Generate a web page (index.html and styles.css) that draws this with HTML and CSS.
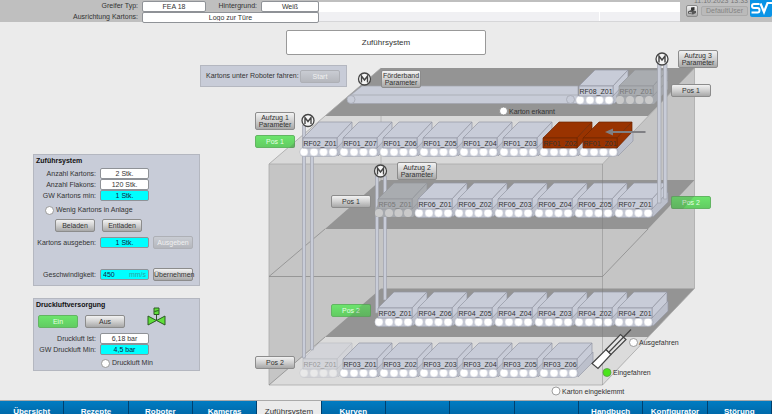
FILE: index.html
```html
<!DOCTYPE html>
<html lang="de">
<head>
<meta charset="utf-8">
<meta name="viewport" content="width=device-width, initial-scale=1">
<title>Zuführsystem</title>
<link rel="stylesheet" href="styles.css">
</head>
<body>
<header class="topbar">
  <div class="recipe">
    <label class="recipe-label" for="greifer">Greifer Typ:</label>
    <input class="value" id="greifer" value="FEA 18" readonly>
    <label class="recipe-label" for="hintergrund">Hintergrund:</label>
    <input class="value" id="hintergrund" value="Weiß" readonly>
    <label class="recipe-label" for="ausrichtung">Ausrichtung Kartons:</label>
    <input class="value wide" id="ausrichtung" value="Logo zur Türe" readonly>
  </div>
  <div class="messages">
    <div class="message"></div>
    <div class="message split"><span></span><span></span></div>
  </div>
  <div class="session">
    <time class="clock">11.10.2023 13:33</time>
    <div class="user">
      <button class="btn icon-btn" type="button" aria-label="Anmelden">
        <svg width="10" height="9" viewBox="0 0 10 9"><path d="M1 5.500 4 4l5 1v2L6 8.500 1 7.500z" fill="#555"/><path d="M4 4V1.500L7.500 1v3L5.500 5z" fill="#333"/><path d="M2 6.500 5 7" stroke="#eee" stroke-width=".8"/></svg>
      </button>
      <button class="user-name" type="button">DefaultUser</button>
    </div>
  </div>
  <svg class="logo" width="22" height="18" viewBox="0 0 22 18" aria-label="SV">
    <path d="M0 0h22v15q0 2-2 2H2q-2 0-2-2z" fill="#0a94e6"/>
    <path d="M9.500 4H4Q2 4 2 6t2 2h3.500q2 0 2 2.300t-2 2.200H1.500" fill="none" stroke="#fff" stroke-width="2"/>
    <path d="M10.500 3.500 14 12 17.500 3H22" fill="none" stroke="#fff" stroke-width="2.200"/>
  </svg>
</header>

<main class="main">
  <h1 class="title">Zuführsystem</h1>

  <aside class="sidebar">
    <section class="panel feed">
      <h2>Zuführsystem</h2>
      <div class="row"><label for="kartons">Anzahl Kartons:</label><input class="value" id="kartons" value="2 Stk." readonly></div>
      <div class="row"><label for="flakons">Anzahl Flakons:</label><input class="value" id="flakons" value="120 Stk." readonly></div>
      <div class="row"><label for="gwkartons">GW Kartons min:</label><input class="value edit" id="gwkartons" value="1 Stk."></div>
      <div class="status"><span class="lamp"></span>Wenig Kartons in Anlage</div>
      <div class="actions centred"><button class="btn" type="button">Beladen</button><button class="btn" type="button">Entladen</button></div>
      <div class="row"><label for="ausgeben">Kartons ausgeben:</label><input class="value edit" id="ausgeben" value="1 Stk."><button class="btn" type="button" disabled>Ausgeben</button></div>
      <div class="row speed"><label for="speed">Geschwindigkeit:</label><span class="value edit unit"><input id="speed" value="450"><span>mm/s</span></span><button class="btn" type="button">Übernehmen</button></div>
    </section>

    <section class="panel air">
      <h2>Druckluftversorgung</h2>
      <div class="actions">
        <button class="btn on" type="button">Ein</button><button class="btn" type="button">Aus</button>
        <svg class="valve" width="19" height="19" viewBox="0 0 19 19"><g fill="#5fe03a" stroke="#2c5a25"><path d="M1 9v9l8.500-4.500zM18 9v9l-8.500-4.500z"/><path d="M9.500 13V7.500"/><path d="M7 1h5v6.500H7z"/><path d="M7.500 4.500 11.500 3.500"/></g></svg>
      </div>
      <div class="row"><label for="ist">Druckluft Ist:</label><input class="value" id="ist" value="6,18 bar" readonly></div>
      <div class="row"><label for="gwmin">GW Druckluft Min:</label><input class="value edit" id="gwmin" value="4,5 bar"></div>
      <div class="status indent"><span class="lamp"></span>Druckluft Min</div>
    </section>
  </aside>

  <section class="plant" aria-label="Anlagenbild">
    <svg class="scene" width="572" height="378" viewBox="200 22 572 378">
      <defs>
        <g id="conveyor">
          <path d="M33 10 50-7v10L35 18z" fill="#bcc0cc" stroke="#9699a6" stroke-width=".7"/>
          <rect x="-3" y="9.500" width="38" height="9" rx="4" fill="#c3c7d3" stroke="#a5a8b4" stroke-width=".6"/>
          <g fill="#fff" stroke="#d3d5dc" stroke-width=".5"><circle cx="1" cy="14" r="4"/><circle cx="11" cy="14" r="4"/><circle cx="20.500" cy="14" r="4"/><circle cx="30" cy="14" r="4"/></g>
        </g>
        <g id="box" stroke-width=".7">
          <path d="M0 0 16-16H49L34 0z"/><path d="M34 0 49-16V-6L34 10z"/><path d="M0 0H34V10H0z"/>
        </g>
        <g id="carton"><use href="#conveyor"/><use href="#box" fill="#c8ccd8" stroke="#9497a3"/></g>
        <g id="carton-red"><use href="#conveyor"/><use href="#box" fill="#993300" stroke="#6f2500"/></g>
        <g id="carton-grey"><path d="M-3 10 16-16H49V3L35 18H-2z" fill="#a6a9ae"/><use href="#box" fill="#a9acb0" stroke="#92959b"/><g fill="#cacaca"><circle cx="1" cy="14" r="4"/><circle cx="11" cy="14" r="4"/><circle cx="20.500" cy="14" r="4"/><circle cx="30" cy="14" r="4"/></g></g>
        <g id="motor"><circle r="6" fill="#f5f5f5" stroke="#444" stroke-width="1.300"/><path d="M-3 3.500V-3L0 1 3-3V3.500" fill="none" stroke="#444" stroke-width="1.400"/></g>
      </defs>

      <path d="M269 164 381 68H694.500V288.500L602.500 385H269z" fill="#c5c5c5"/>
      <path d="M269 164 325 116H648L602.500 164z" fill="#d9d9d9"/>
      <path d="M269 385 325 337H648L602.500 385z" fill="#dbdbdb"/>
      <g fill="#949494"><path d="M325 116 381 68H694.500L648 116z"/><path d="M325 229 381 180H694.500L648 229z"/><path d="M325 337 381 288.500H694.500L648 337z"/></g>
      <g fill="none" stroke="#8c8c8c" stroke-width=".8">
        <path d="M269 164H602.500L694.500 68" stroke="#aaa"/>
        <path d="M269 385V164L381 68M269 385H602.500L694.500 288.500V68" stroke="#aaa"/>
        <path d="M269 276.500H602.500L648 229M269 276.500 325 229M269 385 325 337"/>
        <path d="M381 116V180" stroke="#b0b0b0"/>
      </g>

      <g fill="#c8ccd8" stroke="#a0a3ae" stroke-width=".7">
        <path d="M302.500 125h3V358h-3zM310.500 154h3V350h-3zM375.500 176h3V313h-3zM383.500 176h3V300h-3z"/>
        <path d="M347 98 362 86H578V103.500H351q-4-1-4-5.500z"/><path d="M352 95H578" fill="none"/>
        <circle cx="351" cy="99.500" r="4"/><circle cx="570.500" cy="99.500" r="4"/>
      </g>

      <g class="tag">
        <g transform="translate(579 86)"><use href="#carton"/><text x="17" y="8">RF08_Z01</text></g>
        <g class="dim" transform="translate(619 86)"><use href="#carton-grey"/><text x="17" y="8">RF07_Z01</text></g>

        <g transform="translate(303 138)"><use href="#carton"/><text x="17" y="8">RF02_Z01</text></g>
        <g transform="translate(343 138)"><use href="#carton"/><text x="17" y="8">RF01_Z07</text></g>
        <g transform="translate(383 138)"><use href="#carton"/><text x="17" y="8">RF01_Z06</text></g>
        <g transform="translate(423 138)"><use href="#carton"/><text x="17" y="8">RF01_Z05</text></g>
        <g transform="translate(463 138)"><use href="#carton"/><text x="17" y="8">RF01_Z04</text></g>
        <g transform="translate(503 138)"><use href="#carton"/><text x="17" y="8">RF01_Z03</text></g>
        <g transform="translate(543 138)"><use href="#carton-red"/><text x="17" y="8">RF01_Z02</text></g>
        <g transform="translate(583 138)"><use href="#carton-red"/><text x="17" y="8">RF01_Z01</text></g>

        <g class="dim" transform="translate(378 199)"><use href="#carton-grey"/><text x="17" y="8">RF05_Z01</text></g>
        <g transform="translate(418 199)"><use href="#carton"/><text x="17" y="8">RF06_Z01</text></g>
        <g transform="translate(458 199)"><use href="#carton"/><text x="17" y="8">RF06_Z02</text></g>
        <g transform="translate(498 199)"><use href="#carton"/><text x="17" y="8">RF06_Z03</text></g>
        <g transform="translate(538 199)"><use href="#carton"/><text x="17" y="8">RF06_Z04</text></g>
        <g transform="translate(578 199)"><use href="#carton"/><text x="17" y="8">RF06_Z05</text></g>
        <g transform="translate(618 199)"><use href="#carton"/><text x="17" y="8">RF07_Z01</text></g>

        <g transform="translate(378 308)"><use href="#carton"/><text x="17" y="8">RF05_Z01</text></g>
        <g transform="translate(418 308)"><use href="#carton"/><text x="17" y="8">RF04_Z06</text></g>
        <g transform="translate(458 308)"><use href="#carton"/><text x="17" y="8">RF04_Z05</text></g>
        <g transform="translate(498 308)"><use href="#carton"/><text x="17" y="8">RF04_Z04</text></g>
        <g transform="translate(538 308)"><use href="#carton"/><text x="17" y="8">RF04_Z03</text></g>
        <g transform="translate(578 308)"><use href="#carton"/><text x="17" y="8">RF04_Z02</text></g>
        <g transform="translate(618 308)"><use href="#carton"/><text x="17" y="8">RF04_Z01</text></g>

        <g class="faded" transform="translate(303 359)"><use href="#carton"/><text x="17" y="8">RF02_Z01</text></g>
        <g transform="translate(343 359)"><use href="#carton"/><text x="17" y="8">RF03_Z01</text></g>
        <g transform="translate(383 359)"><use href="#carton"/><text x="17" y="8">RF03_Z02</text></g>
        <g transform="translate(423 359)"><use href="#carton"/><text x="17" y="8">RF03_Z03</text></g>
        <g transform="translate(463 359)"><use href="#carton"/><text x="17" y="8">RF03_Z04</text></g>
        <g transform="translate(503 359)"><use href="#carton"/><text x="17" y="8">RF03_Z05</text></g>
        <g transform="translate(543 359)"><use href="#carton"/><text x="17" y="8">RF03_Z06</text></g>
      </g>

      <path d="M657.500 64h3.500V203h-3.500zM663.500 64h3.500V199h-3.500z" fill="#c8ccd8" stroke="#a0a3ae" stroke-width=".7"/>
      <path d="M602.500 164V385" stroke="#777" stroke-opacity=".5" stroke-width=".8"/>
      <path d="M645.500 132H612" stroke="#808084" stroke-width="2"/><path d="M605 132 613 128.500V135.500z" fill="#808084"/>

      <use href="#motor" x="308" y="120.500"/><use href="#motor" x="364.500" y="79"/><use href="#motor" x="380.500" y="171"/><use href="#motor" x="662" y="59"/>

      <g stroke="#444" stroke-width="1.200" fill="#fff">
        <path d="M592 363.500 606 349.500 611 354.500 598 368.500z"/><path d="M606 349.500 620.500 334.500 626 339.500 611 354.500z" fill="#e6e6e6"/><path d="M609 352 631 329.500"/>
      </g>
      <g class="lamps">
        <circle cx="503.500" cy="111" r="4"/><text x="509" y="114">Karton erkannt</text>
        <circle cx="633.500" cy="342.500" r="4"/><text x="639" y="345">Ausgefahren</text>
        <circle class="lit" cx="607" cy="372.500" r="4"/><text x="613" y="375">Eingefahren</text>
        <circle cx="556" cy="391" r="4"/><text x="562" y="394">Karton eingeklemmt</text>
      </g>
    </svg>

    <div class="panel start"><span id="start-label">Kartons unter Roboter fahren:</span><button class="btn" type="button" aria-describedby="start-label" disabled>Start</button></div>
    <button class="btn tall p-foerderband" type="button">Förderband Parameter</button>
    <button class="btn tall p-aufzug1" type="button">Aufzug 1 Parameter</button>
    <button class="btn tall p-aufzug2" type="button">Aufzug 2 Parameter</button>
    <button class="btn tall p-aufzug3" type="button">Aufzug 3 Parameter</button>
    <button class="btn on p-a1-pos1" type="button">Pos 1</button>
    <button class="btn p-a1-pos2" type="button">Pos 2</button>
    <button class="btn p-a2-pos1" type="button">Pos 1</button>
    <button class="btn on p-a2-pos2" type="button">Pos 2</button>
    <button class="btn p-a3-pos1" type="button">Pos 1</button>
    <button class="btn on p-a3-pos2" type="button">Pos 2</button>
    <svg class="shade" width="572" height="378" viewBox="200 22 572 378"><g fill="#555" fill-opacity=".2"><path d="M289 148 295 142V148z"/><path d="M349 317 363 304H371V317z"/><path d="M671 196H694.500L683 209H671z"/></g></svg>
  </section>
</main>

<nav class="tabs">
  <a href="#uebersicht">Übersicht</a>
  <a href="#rezepte">Rezepte</a>
  <a href="#roboter">Roboter</a>
  <a href="#kameras">Kameras</a>
  <a class="active" href="#zufuehrsystem" aria-current="page">Zuführsystem</a>
  <a href="#kurven">Kurven</a>
  <span></span>
  <span></span>
  <span></span>
  <a href="#handbuch">Handbuch</a>
  <a href="#konfigurator">Konfigurator</a>
  <a href="#stoerung">Störung</a>
</nav>
</body>
</html>
```
FILE: styles.css
```css
* { box-sizing: border-box; }

body {
  margin: 0;
  height: 100vh;
  overflow: hidden;
  background: #ebebeb;
  color: #333;
  font: 7px/10px "Liberation Sans", Arial, sans-serif;
}

input, button { font: inherit; color: inherit; margin: 0; }

/* Header */
.topbar {
  display: flex;
  height: 22px;
  background: #bfbfbf;
}

.recipe {
  display: grid;
  grid-template-columns: 142px 64px 55px 58px;
  grid-template-rows: 10px 10px;
  row-gap: 1px;
  padding-top: 1px;
}

.recipe-label { text-align: right; padding-right: 4px; white-space: nowrap; }
.recipe .value { width: 100%; height: 11px; }
.recipe .wide { grid-column: 2 / 5; }

.messages {
  flex: 1;
  padding-top: 2px;
  border-bottom: 1px solid #d6d6d8;
}

.message { height: 10px; background: #fff; }
.split { height: 9px; display: flex; gap: 1px; }
.split span { flex: 2; background: #f0f0f3; }
.split span:first-child { flex: 7; }

.session { width: 70px; padding-left: 6px; }
.clock {
  display: block;
  height: 5px;
  padding-left: 8px;
  line-height: 2px;
  white-space: nowrap;
  color: #777;
}
.user { display: flex; gap: 3px; padding-right: 2px; align-items: center; }
.icon-btn.btn { width: 12px; height: 12px; padding: 0; }
.user-name {
  flex: 1;
  height: 10px;
  padding: 0;
  line-height: 8px;
  border: 1px solid #aaa;
  border-radius: 2px;
  background: #bababa;
  color: #858585;
}
.logo { display: block; }

/* Value fields */
.value {
  width: 49px;
  height: 11px;
  padding: 0 2px;
  border: 1px solid #8f9297;
  border-radius: 2px;
  background: #fff;
  text-align: center;
  line-height: 9px;
}
.edit { background: #00ffff; color: #124; }
.unit { display: flex; justify-content: space-between; }
.unit input { width: 20px; padding: 0; border: 0; background: none; }
.unit span { color: #2ba3a3; }

/* Buttons */
.btn {
  width: 40px;
  height: 13px;
  padding: 0;
  border: 1px solid #8c8c8c;
  border-radius: 2px;
  background: linear-gradient(#f2f2f2, #d0d0d0 50%, #a8a8a8);
  color: #333;
  line-height: 7px;
  text-align: center;
}
.btn:disabled { background: linear-gradient(#c9ccd3, #b5b7bd); border-color: #aeb0b6; color: #f0f0f0; }
.btn.on { background: linear-gradient(#6ce46c, #62cc62); border-color: #62b562; color: #e4ffe4; }
.btn.tall { height: 18px; }

/* Page */
.main {
  display: grid;
  grid-template-columns: 200px 1fr;
  grid-template-rows: 132px auto;
}

.title {
  grid-area: 1 / 1 / 2 / 3;
  justify-self: center;
  z-index: 1;
  width: 26%;
  height: 25px;
  margin: 8px 0 0;
  border: 1px solid #999;
  border-radius: 2px;
  background: #fff;
  font-size: 8px;
  font-weight: normal;
  line-height: 23px;
  text-align: center;
}

.sidebar { grid-area: 2 / 1; padding-left: 33px; }

.panel { background: #c8ccd8; border: 1px solid #b4b7c0; }
.panel h2 { margin: 0; padding-left: 2px; font-size: 7px; line-height: 12px; color: #111; }

.row {
  display: grid;
  grid-template-columns: 62px 49px 40px;
  column-gap: 4px;
  align-items: center;
  height: 11px;
}
.row label { text-align: right; white-space: nowrap; }

.status { display: flex; align-items: center; gap: 2px; height: 10px; padding-left: 11px; }
.status.indent { padding-left: 67px; }
.lamp { width: 9px; height: 9px; border: 1px solid #999; border-radius: 50%; background: #fff; }

.actions { display: flex; gap: 7px; }
.actions.centred { padding-left: 21px; }

.feed { height: 132px; margin-bottom: 12px; }
.feed h2 { margin-bottom: 1px; }
.feed .status { margin: 4px 0; }
.feed .actions { margin-bottom: 4px; }
.feed .speed { margin-top: 21px; }

.air { height: 73px; }
.air .actions { padding-left: 4px; margin-top: 4px; height: 18px; }
.air .valve { margin: -8px 0 0 15px; }
.air .status { margin-top: 3px; }

/* Plant picture with its controls placed on the canvas */
.plant { grid-area: 1 / 2 / 3 / 3; position: relative; }
.scene, .shade { display: block; }
.shade { position: absolute; left: 0; top: 0; pointer-events: none; }
.plant text { font-size: 7px; fill: #333; }
.plant .dim text { fill: #777; }
.tag text { text-anchor: middle; }
.faded { opacity: .4; }
.lamps circle { fill: #fff; stroke: #888; stroke-width: .8px; }
.lamps .lit { fill: #4be51c; stroke: #5a9a45; }

.plant .btn { position: absolute; }
.plant .start {
  position: absolute;
  left: 0;
  top: 43px;
  display: flex;
  align-items: center;
  justify-content: space-between;
  width: 147px;
  height: 22px;
  padding: 0 6px 0 5px;
  white-space: nowrap;
}
.plant .start .btn { position: static; }

.p-foerderband { left: 181px; top: 48px; }
.p-aufzug1 { left: 55px; top: 90px; }
.p-aufzug2 { left: 197px; top: 140px; }
.p-aufzug3 { left: 478px; top: 28px; }
.p-a1-pos1 { left: 55px; top: 113px; }
.p-a1-pos2 { left: 55px; top: 334px; }
.p-a2-pos1 { left: 131px; top: 173px; }
.p-a2-pos2 { left: 131px; top: 282px; }
.p-a3-pos1 { left: 471px; top: 62px; }
.p-a3-pos2 { left: 471px; top: 174px; }

/* Navigation */
.tabs {
  display: grid;
  grid-template-columns: repeat(12, 1fr);
  height: 28px;
  border-top: 1px solid #aaa;
}
.tabs a, .tabs span {
  border-right: 1px solid #00406e;
  background: linear-gradient(#007cc2, #005590);
  color: #fff;
  font-size: 8px;
  font-weight: bold;
  line-height: 22px;
  text-align: center;
  text-decoration: none;
}
.tabs .active { background: #ebebeb; color: #333; font-weight: normal; }
```
